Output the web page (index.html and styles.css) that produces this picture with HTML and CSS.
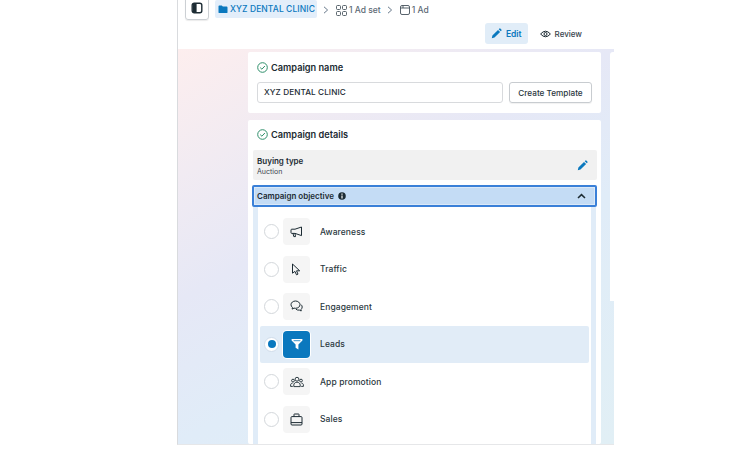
FILE: index.html
```html
<!DOCTYPE html>
<html lang="en">
<head>
    <meta charset="UTF-8">
    <meta name="viewport" content="width=device-width, initial-scale=1.0">
    <title>Campaign editor</title>
    <link rel="stylesheet" href="styles.css">
</head>
<body>
    <div class="app">
        <header class="topbar">
            <div class="crumbs">
                <button class="panel-toggle">
                    <svg width="12" height="12" viewBox="0 0 12 12"><rect x="1.2" y="1.2" width="9.6" height="9.6" rx="2" fill="none" stroke="#1c2b33" stroke-width="1.4"/><path d="M2 2h3.6v8H2z" fill="#1c2b33"/></svg>
                </button>
                <div class="crumb-campaign">
                    <svg width="10" height="9" viewBox="0 0 11 10"><path d="M0.5 1.5q0-1 1-1h2.6l1.2 1.3h4.2q1 0 1 1v5.2q0 1-1 1h-8q-1 0-1-1z" fill="#0a78be"/></svg>
                    <span>XYZ DENTAL CLINIC</span>
                </div>
                <svg class="chevron" width="6" height="8" viewBox="0 0 6 8"><path d="M1 .8 4.6 4 1 7.2" fill="none" stroke="#67788a" stroke-width="1"/></svg>
                <div class="crumb">
                    <svg width="11" height="11" viewBox="0 0 11 11" fill="none" stroke="#46525c" stroke-width=".9"><rect x=".5" y=".5" width="4" height="4" rx="1"/><rect x="6.5" y=".5" width="4" height="4" rx="1"/><rect x=".5" y="6.5" width="4" height="4" rx="1"/><rect x="6.5" y="6.5" width="4" height="4" rx="1"/></svg>
                    <span>1 Ad set</span>
                </div>
                <svg class="chevron" width="6" height="8" viewBox="0 0 6 8"><path d="M1 .8 4.6 4 1 7.2" fill="none" stroke="#67788a" stroke-width="1"/></svg>
                <div class="crumb">
                    <svg width="10" height="10" viewBox="0 0 10 10" fill="none" stroke="#46525c" stroke-width=".9"><rect x=".5" y=".5" width="9" height="9" rx="1.5"/><path d="M.5 3h9M3 .5V3"/></svg>
                    <span>1 Ad</span>
                </div>
            </div>
            <div class="modes">
                <button class="mode mode-active">
                    <svg width="11" height="11" viewBox="0 0 11 11"><path d="M.8 10.2l.6-2.7 5.6-5.6 2.1 2.1-5.6 5.6zM7.7 1.2l.8-.7q.4-.3.8 0l1.2 1.2q.3.4 0 .8l-.7.8z" fill="#0a78be"/></svg>
                    Edit
                </button>
                <button class="mode">
                    <svg width="11" height="8" viewBox="0 0 11 8" fill="none" stroke="#1c2b33" stroke-width="1"><path d="M.6 4Q5.5-1.6 10.4 4 5.5 9.6.6 4z"/><circle cx="5.5" cy="4" r="1.5"/></svg>
                    Review
                </button>
            </div>
        </header>

        <main class="workspace">
            <div class="form-column">
                <section class="card card-name">
                    <h2 class="card-title">
                        <svg width="11" height="11" viewBox="0 0 11 11" fill="none" stroke="#2f8f6b" stroke-width="1"><circle cx="5.5" cy="5.5" r="4.8"/><path d="M3.2 5.6 4.9 7.2 7.9 4"/></svg>
                        Campaign name
                    </h2>
                    <div class="name-row">
                        <div class="name-input">XYZ DENTAL CLINIC</div>
                        <button class="template-button">Create Template</button>
                    </div>
                </section>

                <section class="card card-details">
                    <h2 class="card-title">
                        <svg width="11" height="11" viewBox="0 0 11 11" fill="none" stroke="#2f8f6b" stroke-width="1"><circle cx="5.5" cy="5.5" r="4.8"/><path d="M3.2 5.6 4.9 7.2 7.9 4"/></svg>
                        Campaign details
                    </h2>
                    <div class="buying-type">
                        <div>
                            <div class="buying-label">Buying type</div>
                            <div class="buying-value">Auction</div>
                        </div>
                        <svg width="11" height="11" viewBox="0 0 11 11"><path d="M.8 10.2l.6-2.7 5.6-5.6 2.1 2.1-5.6 5.6zM7.7 1.2l.8-.7q.4-.3.8 0l1.2 1.2q.3.4 0 .8l-.7.8z" fill="#0a78be"/></svg>
                    </div>
                    <div class="objective-header">
                        <span class="objective-title">Campaign objective</span>
                        <svg class="info" width="8" height="8" viewBox="0 0 8 8"><circle cx="4" cy="4" r="3.8" fill="#1c2b33"/><path d="M3.4 3.4h1.2v3H3.4zM3.4 1.6h1.2v1.1H3.4z" fill="#fff"/></svg>
                        <svg class="collapse" width="9" height="6" viewBox="0 0 9 6"><path d="M1 5 4.5 1.6 8 5" fill="none" stroke="#1c2b33" stroke-width="1.5"/></svg>
                    </div>
                    <div class="objective-list">
                        <div class="objective">
                            <span class="radio"></span>
                            <span class="chip">
                                <svg width="13" height="12" viewBox="0 0 13 12" fill="none" stroke="#1c2b33" stroke-width="1" stroke-linejoin="round"><path d="M1 4q0-.8.8-.8H5L11.5 1v8.6L5 7.4H1.8Q1 7.4 1 6.6zM3 7.4l.8 3.2h1.7L5 7.6"/></svg>
                            </span>
                            <span class="objective-label">Awareness</span>
                        </div>
                        <div class="objective">
                            <span class="radio"></span>
                            <span class="chip">
                                <svg width="11" height="13" viewBox="0 0 11 13" fill="none" stroke="#1c2b33" stroke-width="1" stroke-linejoin="round"><path d="M1.5 1v9.2l2.4-1.8 1.6 3.4 1.5-.7-1.5-3.3h3.2z"/></svg>
                            </span>
                            <span class="objective-label">Traffic</span>
                        </div>
                        <div class="objective">
                            <span class="radio"></span>
                            <span class="chip">
                                <svg width="13" height="13" viewBox="0 0 13 13" fill="none" stroke="#1c2b33" stroke-width="1"><path d="M5.5 1C3 1 1 2.6 1 4.7c0 1.1.5 2 1.4 2.7l-.2 1.7 1.8-1c.5.1 1 .2 1.5.2 2.5 0 4.5-1.6 4.5-3.6S8 1 5.5 1z"/><path d="M11 4.6c.7.6 1.2 1.5 1.2 2.4 0 1-.5 1.8-1.2 2.4l.2 1.6-1.8-.9c-1.3.2-2.6-.1-3.5-.9"/></svg>
                            </span>
                            <span class="objective-label">Engagement</span>
                        </div>
                        <div class="objective objective-selected">
                            <span class="radio radio-on"></span>
                            <span class="chip chip-on">
                                <svg width="12" height="12" viewBox="0 0 12 12"><path d="M.6 1h10.8v1.6L7.4 6.6v4.8l-2.8-1.6V6.6L.6 2.6z" fill="#fff"/><path d="M2.6 2.7h6.8" stroke="#0a78be" stroke-width=".8"/></svg>
                            </span>
                            <span class="objective-label">Leads</span>
                        </div>
                        <div class="objective">
                            <span class="radio"></span>
                            <span class="chip">
                                <svg width="14" height="12" viewBox="0 0 14 12" fill="none" stroke="#1c2b33" stroke-width=".9"><circle cx="7" cy="3.2" r="1.9"/><circle cx="3" cy="4.6" r="1.4"/><circle cx="11" cy="4.6" r="1.4"/><path d="M3.8 10.6V9c0-1.6 1.4-2.8 3.2-2.8s3.2 1.2 3.2 2.8v1.6zM2.8 10.4H.6V9c0-1 .8-1.8 2-1.9M11.2 10.4h2.2V9c0-1-.8-1.8-2-1.9"/></svg>
                            </span>
                            <span class="objective-label">App promotion</span>
                        </div>
                        <div class="objective">
                            <span class="radio"></span>
                            <span class="chip">
                                <svg width="13" height="13" viewBox="0 0 13 13" fill="none" stroke="#1c2b33" stroke-width="1"><rect x="1" y="3.6" width="11" height="8.4" rx="1"/><path d="M4 3.6V1.4q0-.4.4-.4h4.2q.4 0 .4.4v2.2M1 9.6h11"/></svg>
                            </span>
                            <span class="objective-label">Sales</span>
                        </div>
                    </div>
                </section>
            </div>
            <aside class="side-card"></aside>
        </main>
    </div>
</body>
</html>
```

FILE: styles.css
```css
* {
    margin: 0;
    padding: 0;
    box-sizing: border-box;
    font-family: 'Inter', 'Liberation Sans', sans-serif;
}

html, body {
    height: 100%;
    overflow: hidden;
}

body {
    background: white;
    color: #1c2b33;
}

button {
    background: none;
    border: none;
}

.app {
    width: 437px;
    height: 445px;
    margin-left: 177px;
    border-left: 1px solid #d9dbde;
    border-bottom: 1px solid #e6e7e9;
    display: flex;
    flex-direction: column;
    overflow: hidden;
}

.topbar {
    height: 49px;
    flex-shrink: 0;
    background: white;
}

.crumbs {
    display: flex;
    align-items: center;
    height: 20px;
    padding-left: 7px;
    font-size: 8.5px;
}

.panel-toggle {
    width: 24px;
    height: 24px;
    margin: -4px 6px 0 0;
    border: 1px solid #ccd0d4;
    border-radius: 3px;
    box-shadow: 0 1px 1px rgba(0,0,0,0.08);
    display: flex;
    align-items: center;
    justify-content: center;
    flex-shrink: 0;
}

.crumb-campaign {
    display: flex;
    align-items: center;
    gap: 2px;
    height: 18px;
    margin-top: -2px;
    padding: 0 2px 0 3px;
    background: #e3eefa;
    border-radius: 2px;
    color: #0a78be;
    font-weight: 500;
    letter-spacing: 0.01em;
    white-space: nowrap;
}

.chevron {
    margin: -1px 7px 0 6px;
}

.crumb {
    display: flex;
    align-items: center;
    gap: 2px;
    color: #5d6a75;
    font-weight: 500;
    white-space: nowrap;
}

.modes {
    display: flex;
    align-items: center;
    justify-content: flex-end;
    gap: 5px;
    margin-top: 3px;
    padding-right: 25px;
}

.mode {
    display: flex;
    align-items: center;
    gap: 4px;
    height: 21px;
    padding: 0 7px;
    border-radius: 3px;
    font-size: 8px;
    font-weight: 500;
    color: #39454e;
}

.mode-active {
    padding: 0 6px;
    background: #e1edf8;
    color: #0a78be;
    font-size: 8.5px;
    font-weight: 600;
}

.workspace {
    flex: 1;
    min-height: 0;
    display: flex;
    gap: 9px;
    padding: 3px 0 0 70px;
    background: linear-gradient(150deg, #fdeeee 0%, #e6e8f6 39%, #e0ecf8 61%, #e1eff5 100%);
}

.form-column {
    width: 353px;
    flex-shrink: 0;
    display: flex;
    flex-direction: column;
    gap: 7px;
}

.card {
    background: white;
    border-radius: 2px;
    padding: 0 4px;
}

.card-name {
    height: 61px;
    flex-shrink: 0;
}

.card-details {
    flex: 1;
    min-height: 0;
    overflow: hidden;
}

.card-title {
    display: flex;
    align-items: center;
    gap: 3px;
    height: 29px;
    padding: 0 0 0 5px;
    font-size: 9.2px;
    font-weight: 600;
}

.card-name .card-title {
    height: 30px;
}

.name-row {
    display: flex;
    gap: 6px;
    padding: 0 5px;
}

.name-input {
    flex: 1;
    height: 21px;
    line-height: 19px;
    padding-left: 6px;
    border: 1px solid #d8dadd;
    border-radius: 3px;
    font-size: 8.2px;
    font-weight: 500;
    letter-spacing: 0.01em;
}

.template-button {
    width: 83px;
    height: 21px;
    border: 1px solid #c8ccd0;
    border-radius: 3px;
    box-shadow: 0 1px 1px rgba(0,0,0,0.06);
    font-size: 8.2px;
    font-weight: 500;
    color: #2b3841;
}

.buying-type {
    display: flex;
    align-items: center;
    justify-content: space-between;
    height: 30px;
    margin: 1px 0 0 1px;
    width: 344px;
    padding: 1px 9px 0 4px;
    background: #f1f1f1;
    border-radius: 2px;
}

.buying-label {
    font-size: 8px;
    font-weight: 600;
    line-height: 11px;
}

.buying-value {
    font-size: 7px;
    line-height: 9px;
    color: #39454e;
}

.objective-header {
    display: flex;
    align-items: center;
    gap: 4px;
    width: 345px;
    height: 22px;
    margin-top: 5px;
    padding: 0 9px 0 3px;
    background: #c4dcf5;
    border: 2px solid #3a80d8;
    box-shadow: inset 0 0 0 1px #dbe9f8;
    border-radius: 2px;
}

.objective-title {
    font-size: 8px;
    font-weight: 600;
}

.collapse {
    margin-left: auto;
}

.objective-list {
    width: 343px;
    margin-left: 1px;
    padding: 6px 2px 0;
    border-left: 5px solid #e0ecf8;
    border-right: 5px solid #e0ecf8;
    height: 240px;
}

.objective {
    display: flex;
    align-items: center;
    height: 37.5px;
    padding-left: 4px;
    border-radius: 2px;
}

.objective-selected {
    background: #e1ecf7;
}

.radio {
    width: 15px;
    height: 15px;
    border-radius: 50%;
    border: 1px solid #d3d7db;
    background: white;
    flex-shrink: 0;
}

.radio-on {
    display: flex;
    align-items: center;
    justify-content: center;
    border-color: #cfdcea;
}

.radio-on::after {
    content: "";
    width: 8px;
    height: 8px;
    border-radius: 50%;
    background: #0a78be;
}

.chip {
    width: 27px;
    height: 27px;
    margin: 0 10px 0 4px;
    background: #f5f5f5;
    border-radius: 4px;
    display: flex;
    align-items: center;
    justify-content: center;
    flex-shrink: 0;
}

.chip-on {
    background: #0a78be;
    box-shadow: 0 0 0 1px #fff;
}

.objective-label {
    font-size: 8.5px;
    font-weight: 500;
    letter-spacing: 0.01em;
    color: #2b3841;
}

.side-card {
    width: 4px;
    height: 249px;
    background: white;
    border-top-left-radius: 3px;
    flex-shrink: 0;
}
```
